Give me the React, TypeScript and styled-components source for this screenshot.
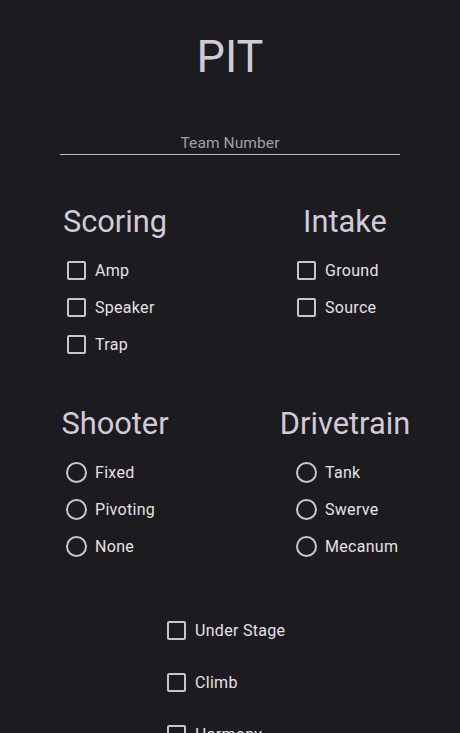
import React from "react";
import styled, { createGlobalStyle } from "styled-components";

const GlobalStyle = createGlobalStyle`
  html, body {
    margin: 0;
    padding: 0;
    background: #1c1b1f;
    overflow: hidden;
  }
  body {
    font-family: Roboto, "Noto Sans", "Liberation Sans", sans-serif;
  }
`;

const Page = styled.main`
  width: 460px;
  min-height: 733px;
  background: #1c1b1f;
  display: flex;
  flex-direction: column;
  align-items: stretch;
  padding-top: 31px;
  box-sizing: border-box;
`;

const Title = styled.h1`
  margin: 0;
  font-size: 45px;
  line-height: 52px;
  font-weight: 400;
  color: #d2cad8;
  text-align: center;
`;

const Field = styled.div`
  width: 340px;
  align-self: center;
  margin-top: 50px;
  padding-bottom: 1px;
  border-bottom: 1px solid #bdb8c2;
  display: flex;
  justify-content: center;
`;

const FieldLabel = styled.span`
  font-size: 15.5px;
  line-height: 20px;
  color: #a39ea9;
  letter-spacing: 0.1px;
`;

const Grid = styled.div`
  margin-top: 46px;
  display: grid;
  grid-template-columns: 230px 230px;
  row-gap: 40px;
`;

const Section = styled.section`
  display: flex;
  flex-direction: column;
`;

const SectionTitle = styled.h2`
  margin: 0;
  padding-top: 1px;
  font-size: 30.8px;
  line-height: 40px;
  font-weight: 400;
  color: #d2cad8;
  text-align: center;
`;

const List = styled.div`
  margin-top: 10px;
  padding-left: 57px;
  display: flex;
  flex-direction: column;
`;

const Row = styled.label<{ $height: number }>`
  height: ${(p) => p.$height}px;
  display: flex;
  align-items: center;
`;

const Control = styled.span`
  width: 38px;
  height: 38px;
  display: flex;
  align-items: center;
  justify-content: center;
  flex: none;
`;

const Box = styled.span`
  width: 19px;
  height: 19px;
  box-sizing: border-box;
  border: 2px solid #cac4d0;
  border-radius: 2px;
`;

const Circle = styled.span`
  width: 21px;
  height: 21px;
  box-sizing: border-box;
  border: 2px solid #cac4d0;
  border-radius: 50%;
`;

const ItemText = styled.span`
  font-size: 16px;
  line-height: 24px;
  padding-top: 1px;
  letter-spacing: 0.3px;
  color: #e6e1e5;
  white-space: nowrap;
`;

const Extras = styled.div`
  margin-top: 39px;
  padding-left: 157px;
  display: flex;
  flex-direction: column;
`;

type Kind = "check" | "radio";

const Option: React.FC<{ kind: Kind; label: string; height: number }> = ({
  kind,
  label,
  height,
}) => (
  <Row $height={height}>
    <Control>{kind === "check" ? <Box /> : <Circle />}</Control>
    <ItemText>{label}</ItemText>
  </Row>
);

const groups: { title: string; kind: Kind; items: string[] }[] = [
  { title: "Scoring", kind: "check", items: ["Amp", "Speaker", "Trap"] },
  { title: "Intake", kind: "check", items: ["Ground", "Source"] },
  { title: "Shooter", kind: "radio", items: ["Fixed", "Pivoting", "None"] },
  { title: "Drivetrain", kind: "radio", items: ["Tank", "Swerve", "Mecanum"] },
];

export default function App() {
  return (
    <>
      <GlobalStyle />
      <Page>
        <Title>PIT</Title>
        <Field>
          <FieldLabel>Team Number</FieldLabel>
        </Field>
        <Grid>
          {groups.map((g) => (
            <Section key={g.title}>
              <SectionTitle>{g.title}</SectionTitle>
              <List>
                {g.items.map((it) => (
                  <Option key={it} kind={g.kind} label={it} height={37} />
                ))}
              </List>
            </Section>
          ))}
        </Grid>
        <Extras>
          {["Under Stage", "Climb", "Harmony"].map((it) => (
            <Option key={it} kind="check" label={it} height={52} />
          ))}
        </Extras>
      </Page>
    </>
  );
}
